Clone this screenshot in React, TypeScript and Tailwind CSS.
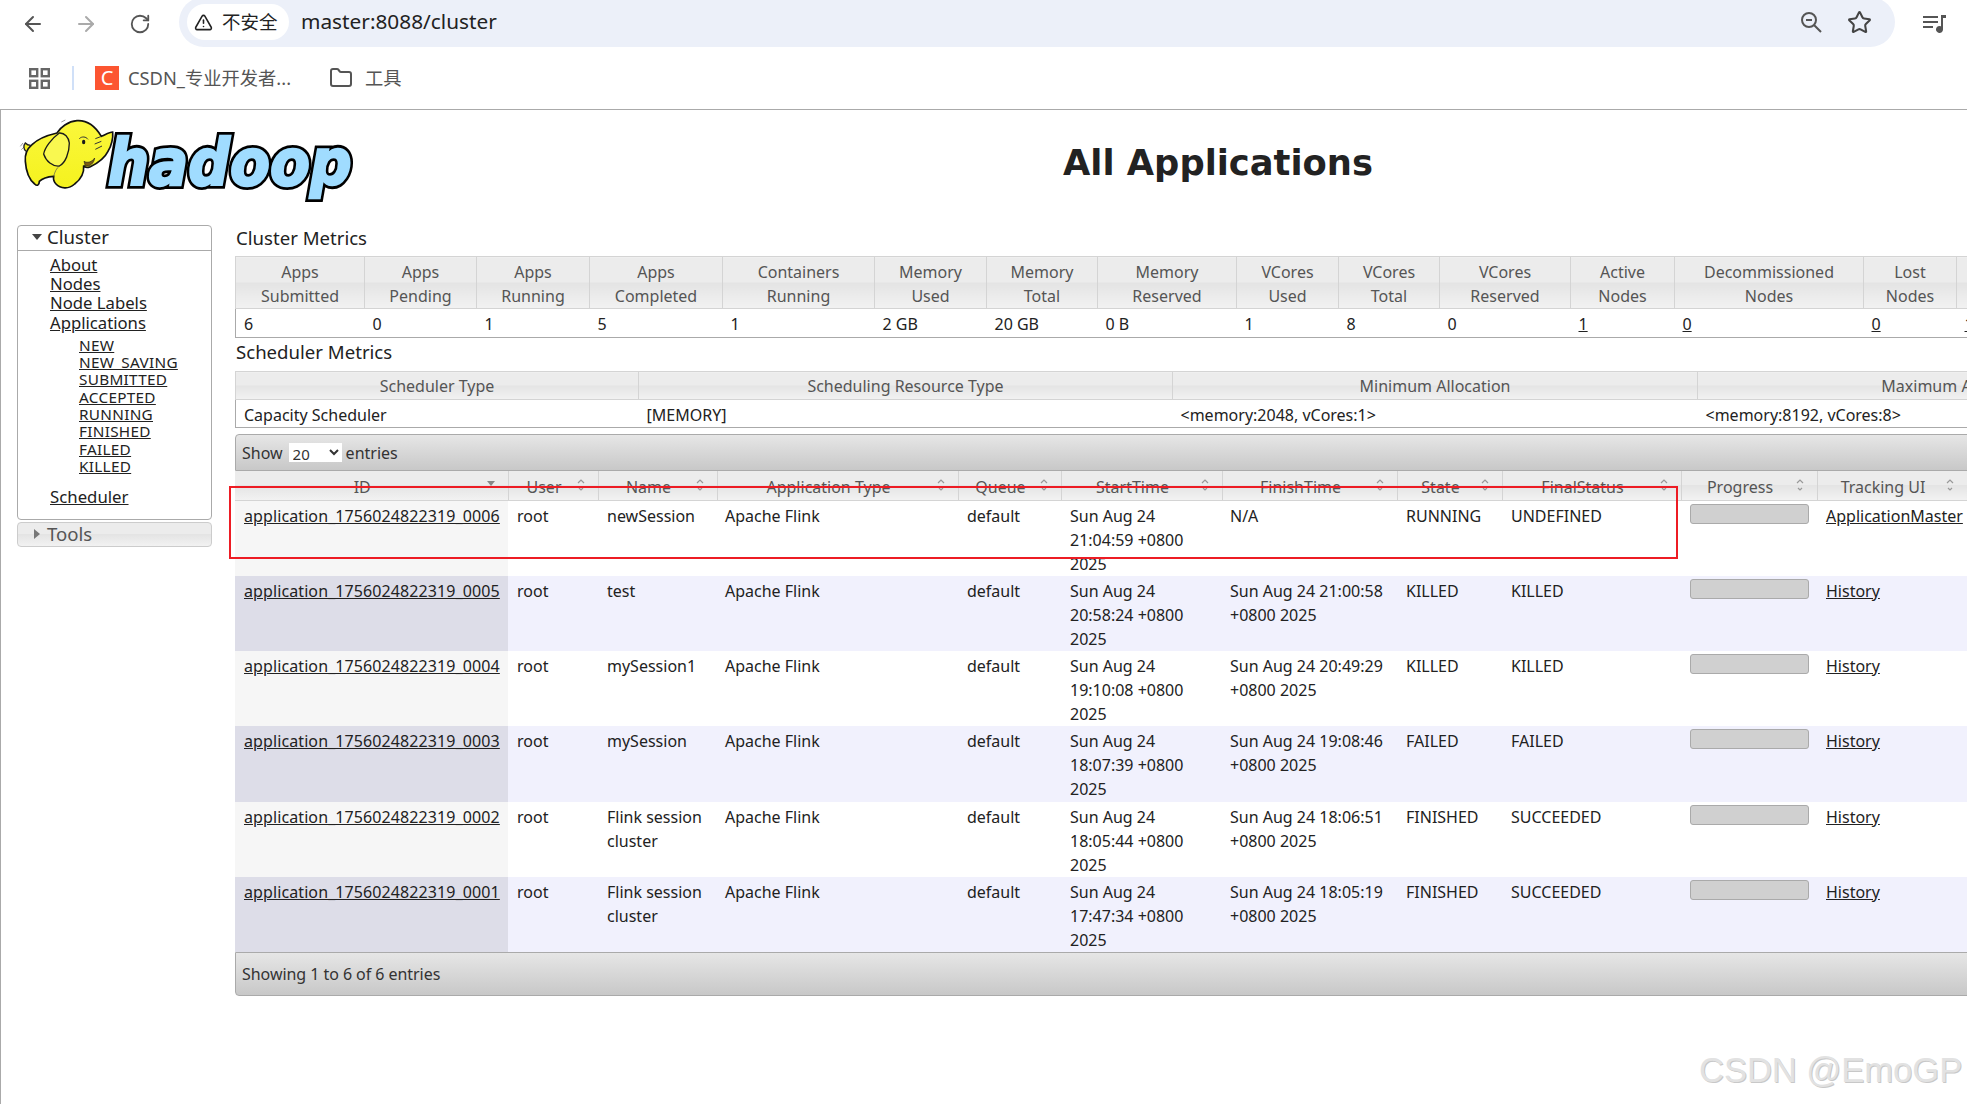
import type { ReactNode } from "react";
import { ArrowLeft, ArrowRight, Folder, RotateCw, Star, TriangleAlert } from "lucide-react";

const metrics = [
  { top: "Apps", bottom: "Submitted", value: "6", w: "w-[129px]" },
  { top: "Apps", bottom: "Pending", value: "0", w: "w-[112px]" },
  { top: "Apps", bottom: "Running", value: "1", w: "w-[113px]" },
  { top: "Apps", bottom: "Completed", value: "5", w: "w-[133px]" },
  { top: "Containers", bottom: "Running", value: "1", w: "w-[152px]" },
  { top: "Memory", bottom: "Used", value: "2 GB", w: "w-[112px]" },
  { top: "Memory", bottom: "Total", value: "20 GB", w: "w-[111px]" },
  { top: "Memory", bottom: "Reserved", value: "0 B", w: "w-[139px]" },
  { top: "VCores", bottom: "Used", value: "1", w: "w-[102px]" },
  { top: "VCores", bottom: "Total", value: "8", w: "w-[101px]" },
  { top: "VCores", bottom: "Reserved", value: "0", w: "w-[131px]" },
  { top: "Active", bottom: "Nodes", value: "1", w: "w-[104px]", link: true },
  { top: "Decommissioned", bottom: "Nodes", value: "0", w: "w-[189px]", link: true },
  { top: "Lost", bottom: "Nodes", value: "0", w: "w-[93px]", link: true },
  { top: "", bottom: "", value: "1", w: "w-[120px]", link: true },
];

const schedulerCols = [
  { label: "Scheduler Type", value: "Capacity Scheduler", w: "w-[403px]" },
  { label: "Scheduling Resource Type", value: "[MEMORY]", w: "w-[534px]" },
  { label: "Minimum Allocation", value: "<memory:2048, vCores:1>", w: "w-[525px]" },
  { label: "Maximum Allocation", value: "<memory:8192, vCores:8>", w: "w-[522px]" },
];

const appCols = [
  { label: "ID", w: "w-[273px]", sorted: true },
  { label: "User", w: "w-[90px]" },
  { label: "Name", w: "w-[119px]" },
  { label: "Application Type", w: "w-[241px]" },
  { label: "Queue", w: "w-[103px]" },
  { label: "StartTime", w: "w-[161px]" },
  { label: "FinishTime", w: "w-[175px]" },
  { label: "State", w: "w-[105px]" },
  { label: "FinalStatus", w: "w-[179px]" },
  { label: "Progress", w: "w-[136px]" },
  { label: "Tracking UI", w: "w-[150px]" },
];

const apps = [
  { id: "application_1756024822319_0006", name: ["newSession"], start: ["Sun Aug 24", "21:04:59 +0800", "2025"], finish: ["N/A"], state: "RUNNING", final: "UNDEFINED", ui: "ApplicationMaster" },
  { id: "application_1756024822319_0005", name: ["test"], start: ["Sun Aug 24", "20:58:24 +0800", "2025"], finish: ["Sun Aug 24 21:00:58", "+0800 2025"], state: "KILLED", final: "KILLED", ui: "History" },
  { id: "application_1756024822319_0004", name: ["mySession1"], start: ["Sun Aug 24", "19:10:08 +0800", "2025"], finish: ["Sun Aug 24 20:49:29", "+0800 2025"], state: "KILLED", final: "KILLED", ui: "History" },
  { id: "application_1756024822319_0003", name: ["mySession"], start: ["Sun Aug 24", "18:07:39 +0800", "2025"], finish: ["Sun Aug 24 19:08:46", "+0800 2025"], state: "FAILED", final: "FAILED", ui: "History" },
  { id: "application_1756024822319_0002", name: ["Flink session", "cluster"], start: ["Sun Aug 24", "18:05:44 +0800", "2025"], finish: ["Sun Aug 24 18:06:51", "+0800 2025"], state: "FINISHED", final: "SUCCEEDED", ui: "History" },
  { id: "application_1756024822319_0001", name: ["Flink session", "cluster"], start: ["Sun Aug 24", "17:47:34 +0800", "2025"], finish: ["Sun Aug 24 18:05:19", "+0800 2025"], state: "FINISHED", final: "SUCCEEDED", ui: "History" },
];

const states = ["NEW", "NEW_SAVING", "SUBMITTED", "ACCEPTED", "RUNNING", "FINISHED", "FAILED", "KILLED"];

const headBg = "bg-[linear-gradient(#ececec_0%,#ececec_48%,#e4e4e4_50%,#f2f2f2_100%)]";

const BrowserBar = () => (
  <div className="border-b border-[#aaaaaa] h-[110px] shadow-[inset_0_-3px_0_#ffffff]">
    <div className="flex items-center h-[47px] text-[#555555]">
      <ArrowLeft className="ml-[21px] w-6 h-6" strokeWidth={2} />
      <ArrowRight className="ml-[29px] w-6 h-6 text-[#aaaaaa]" strokeWidth={2} />
      <RotateCw className="ml-[31px] w-[22px] h-[22px]" strokeWidth={2} />
      <div className="ml-[28px] -mt-[3px] w-[1716px] h-[50px] rounded-[25px] bg-[#ecf0f9] flex items-center pl-2">
        <div className="h-[36px] w-[102px] rounded-full bg-white flex items-center gap-[9px] pl-[7px] text-[#222222]">
          <TriangleAlert className="w-[19px] h-[19px]" strokeWidth={2} />
          <span className="text-[18.5px]">不安全</span>
        </div>
        <span className="ml-3 text-[20.8px] text-[#222222]">master:8088/cluster</span>
        <svg className="ml-auto w-[22px] h-[22px]" viewBox="0 0 22 22" fill="none" stroke="#555555" strokeWidth="2">
          <circle cx="9" cy="9" r="7" />
          <path d="M6 9h6M14 14l7 7" />
        </svg>
        <Star className="ml-[25px] mr-[23px] w-[25px] h-[25px] text-[#444444]" strokeWidth={2} />
      </div>
      <svg className="ml-[28px] w-[23px] h-[18px]" viewBox="0 0 23 18" fill="#555555">
        <path d="M0 1h15v2H0zM0 6h15v2H0zM0 11h10v2H0z" />
        <path d="M18 0h5v3h-3v11.5a3.5 3.5 0 1 1-2-3.2z" />
      </svg>
    </div>
    <div className="flex items-center h-[59px] pt-[3px] text-[#555555] text-[18.3px]">
      <svg className="ml-[29px] w-[21px] h-[21px]" viewBox="0 0 21 21" fill="none" stroke="#666666" strokeWidth="2.4">
        <rect x="1.2" y="1.2" width="7" height="7" />
        <rect x="12.8" y="1.2" width="7" height="7" />
        <rect x="1.2" y="12.8" width="7" height="7" />
        <rect x="12.8" y="12.8" width="7" height="7" />
      </svg>
      <div className="ml-[22px] w-[2px] h-[24px] bg-[#d0e0f8]" />
      <div className="ml-[21px] w-6 h-6 bg-[#fc5531] flex items-center justify-center text-white text-[20px] leading-none">C</div>
      <span className="ml-[9px]">CSDN_专业开发者...</span>
      <Folder className="ml-[38px] w-6 h-6" strokeWidth={2} />
      <span className="ml-[12px]">工具</span>
    </div>
  </div>
);

const logoText = {
  x: 322,
  y: 240,
  fontFamily: "'DejaVu Sans', sans-serif",
  fontWeight: 700,
  fontStyle: "italic",
  fontSize: 190,
  textLength: 732,
  lengthAdjust: "spacingAndGlyphs" as const,
  strokeLinejoin: "miter" as const,
};

const HadoopLogo = () => (
  <svg className="w-[340px] h-[80px] overflow-visible" viewBox="50 40 1020 240">
    <defs>
      <linearGradient id="elephant" x1="0" y1="0" x2="0" y2="1">
        <stop offset="0" stopColor="#faf73c" />
        <stop offset="1" stopColor="#f5f21e" />
      </linearGradient>
    </defs>
    <text {...logoText} fill="#000000" stroke="#000000" strokeWidth="24">hadoop</text>
    <text {...logoText} aria-hidden="true" fill="#a0dcff" stroke="#a0dcff" strokeWidth="7">hadoop</text>
    <g transform="translate(45 30)">
      <path d="M15 95l8-10M18 105l8-8M138 22l12-6" fill="none" stroke="#999999" strokeWidth="3" />
      <path d="M32 110C24 104 24 92 30 85C36 92 42 92 46 92" fill="#f5f21e" stroke="#222222" strokeWidth="4" />
      <path
        d="M50 90C65 75 95 62 125 55C135 38 158 20 185 18C215 16 240 35 258 65C270 60 282 52 292 52C294 70 288 95 278 110C268 130 248 145 225 156C216 160 208 158 205 152C207 175 195 195 178 208C160 225 135 222 122 208C114 200 114 192 115 185C100 186 82 190 72 200C72 210 66 216 58 208C42 195 32 170 30 140C28 120 36 102 50 90Z"
        fill="url(#elephant)"
        stroke="#111111"
        strokeWidth="5"
      />
      <path d="M132 55C108 72 88 100 85 118C92 140 112 156 132 154C150 145 162 115 162 85C160 68 148 54 132 55Z" fill="#f9f850" stroke="#1a1a1a" strokeWidth="4" />
      <ellipse cx="205" cy="82" rx="5" ry="7" fill="#1a1a1a" />
      <path d="M192 72C200 64 212 66 218 74M240 72L256 66M238 88L258 80M240 104L260 94" fill="none" stroke="#333333" strokeWidth="3" />
      <path d="M206 140C216 146 230 142 238 130C236 146 224 156 210 154Z" fill="#7a5a10" stroke="#222222" strokeWidth="2" />
      <path d="M115 185C118 172 124 160 132 154" fill="none" stroke="#555555" strokeWidth="2" />
    </g>
  </svg>
);

const Sidebar = () => (
  <div className="ml-4 w-[195px] shrink-0">
    <div className="h-[295px] border border-[#aaaaaa] rounded">
      <div className="h-[25px] pb-[2px] border-b border-[#aaaaaa] flex items-center text-[#222222] text-[18.6px]">
        <svg className="ml-[14px] w-[10px] h-[6px]" viewBox="0 0 10 6" fill="#444444">
          <path d="M0 0h10L5 6z" />
        </svg>
        <span className="ml-[5px]">Cluster</span>
      </div>
      <div className="pl-[32px] pt-[4px] text-[#222222]">
        <ul className="text-[16.7px] leading-[19.2px]">
          <li><a className="underline">About</a></li>
          <li><a className="underline">Nodes</a></li>
          <li><a className="underline">Node Labels</a></li>
          <li><a className="underline">Applications</a></li>
        </ul>
        <ul className="pl-[29px] pt-[5px] text-[15.3px] leading-[17.3px] tracking-[0.3px]">
          {states.map((s) => (
            <li key={s}><a className="underline">{s}</a></li>
          ))}
        </ul>
        <div className="pt-[12px] text-[16.8px] leading-[19px]"><a className="underline">Scheduler</a></div>
      </div>
    </div>
    <div className={`mt-[2px] h-[25px] pb-[2px] border border-[#cccccc] rounded flex items-center text-[#555555] text-[18.6px] ${headBg}`}>
      <svg className="ml-[16px] w-[6px] h-[10px]" viewBox="0 0 6 10" fill="#777777">
        <path d="M0 0l6 5-6 5z" />
      </svg>
      <span className="ml-[7px]">Tools</span>
    </div>
  </div>
);

const SortIcon = ({ sorted }: { sorted?: boolean }) => (
  <svg className="absolute right-[12px] top-[7px] w-[10px] h-[13px]" viewBox="0 0 10 13">
    {sorted ? (
      <path d="M1 3h8L5 8z" fill="#888888" />
    ) : (
      <path d="M2 5l3-3 3 3M3 10l2 2 2-2" fill="none" stroke="#999999" strokeWidth="1.2" />
    )}
  </svg>
);

const ClusterMetrics = () => (
  <table className="table-fixed border-collapse w-[1841px]">
    <thead>
      <tr className="h-[52px]">
        {metrics.map((m, i) => (
          <th key={i} className={`${m.w} ${headBg} border border-[#d4d4d4] font-normal text-[#555555] leading-[24px] p-0 pt-[3px]`}>
            {m.top}
            <br />
            {m.bottom}
          </th>
        ))}
      </tr>
    </thead>
    <tbody>
      <tr className="h-[29px]">
        {metrics.map((m, i) => (
          <td key={i} className={`pl-[8px] pt-[2px] border-b border-[#aaaaaa] text-[#222222] leading-[23px] ${i === 0 ? "border-l" : ""}`}>
            {m.link ? <a className="underline">{m.value}</a> : m.value}
          </td>
        ))}
      </tr>
    </tbody>
  </table>
);

const SchedulerMetrics = () => (
  <table className="table-fixed border-collapse w-[1984px]">
    <thead>
      <tr className="h-[28px]">
        {schedulerCols.map((c) => (
          <th key={c.label} className={`${c.w} ${headBg} border border-[#d4d4d4] font-normal text-[#555555] p-0`}>{c.label}</th>
        ))}
      </tr>
    </thead>
    <tbody>
      <tr className="h-[28px]">
        {schedulerCols.map((c, i) => (
          <td key={c.label} className={`pl-[8px] pt-[2px] border-b border-[#aaaaaa] text-[#222222] ${i === 0 ? "border-l" : ""}`}>{c.value}</td>
        ))}
      </tr>
    </tbody>
  </table>
);

// every cell keeps a fixed height: the third date line hangs over the row's end, as on the page
const Cell = ({ first, className, children }: { first: boolean; className: string; children: ReactNode }) => (
  <td className={`p-0 ${className}`}>
    <div className={`pt-[3px] whitespace-nowrap ${first ? "h-[75px]" : "h-[75.4px]"}`}>{children}</div>
  </td>
);

const Lines = ({ lines }: { lines: string[] }) => (
  <>
    {lines.map((l) => (
      <div key={l}>{l}</div>
    ))}
  </>
);

const AppsTable = () => (
  <div className="w-[1795px]">
    <div className="h-[37px] border border-[#aaaaaa] rounded-t bg-[linear-gradient(#e6e6e6,#c8c8c8)] flex items-center justify-between px-[6px] text-[#333333]">
      <div className="flex items-center">
        <span>Show</span>
        <select defaultValue="20" className="ml-[6px] mr-[4px] w-[53px] h-[19px] bg-white text-[15px] leading-none">
          <option value="20">20</option>
        </select>
        <span>entries</span>
      </div>
      <span>Search:</span>
    </div>
    <table className="table-fixed border-collapse w-[1732px]">
      <thead>
        <tr className="h-[29px]">
          {appCols.map((c) => (
            <th key={c.label} className={`${c.w} relative ${headBg} border-r border-b border-[#d4d4d4] font-normal text-[#555555] p-0 pt-[4px] pr-[18px] leading-[24px]`}>
              {c.label}
              <SortIcon sorted={c.sorted} />
            </th>
          ))}
        </tr>
      </thead>
      <tbody className="text-[#222222] leading-[24px] align-top">
        {apps.map((a, i) => {
          const even = i % 2 === 1;
          const first = i === 0;
          return (
            <tr key={a.id} className={even ? "bg-[#f1f1fd]" : "bg-white"}>
              <Cell first={first} className={`pl-[9px] ${even ? "bg-[#ddddE8]" : "bg-[#f6f6f6]"}`}>
                <a className="underline tracking-[0.1px]">{a.id}</a>
              </Cell>
              <Cell first={first} className="pl-[9px]">root</Cell>
              <Cell first={first} className="pl-[9px]"><Lines lines={a.name} /></Cell>
              <Cell first={first} className="pl-[8px]">Apache Flink</Cell>
              <Cell first={first} className="pl-[9px]">default</Cell>
              <Cell first={first} className="pl-[9px]"><Lines lines={a.start} /></Cell>
              <Cell first={first} className="pl-[8px]"><Lines lines={a.finish} /></Cell>
              <Cell first={first} className="pl-[9px]">{a.state}</Cell>
              <Cell first={first} className="pl-[9px]">{a.final}</Cell>
              <Cell first={first} className="pl-[9px]">
                <div className="w-[119px] h-[20px] rounded-[3px] border border-[#aaaaaa] bg-[#d0d0d0]" />
              </Cell>
              <Cell first={first} className="pl-[9px]"><a className="underline">{a.ui}</a></Cell>
            </tr>
          );
        })}
      </tbody>
    </table>
    <div className="h-[44px] border border-[#aaaaaa] rounded-b bg-[linear-gradient(#e6e6e6,#c8c8c8)] flex items-center pl-[6px] text-[#333333] tracking-[-0.05px]">
      Showing 1 to 6 of 6 entries
    </div>
  </div>
);

export default function App() {
  return (
    <div className="relative w-[1967px] h-[1104px] overflow-hidden bg-white text-[16px] font-['Noto_Sans','Noto_Sans_CJK_SC',sans-serif]">
      <BrowserBar />
      <div className="border-l border-[#aaaaaa] h-[994px]">
        <div className="flex h-[115px]">
          <div className="ml-[16px] mt-[8px]"><HadoopLogo /></div>
          <h1 className="ml-[706px] mt-[26px] font-['DejaVu_Sans',sans-serif] text-[35.3px] leading-[54px] font-bold text-[#222222]">All Applications</h1>
        </div>
        <div className="flex">
          <Sidebar />
          <div className="ml-[23px]">
            <h3 className="h-[31px] pl-[1px] text-[18.6px] leading-[26px] text-[#222222]">Cluster Metrics</h3>
            <ClusterMetrics />
            <h3 className="h-[33px] pl-[1px] text-[18.6px] leading-[28px] text-[#222222]">Scheduler Metrics</h3>
            <SchedulerMetrics />
            <div className="h-[6px]" />
            <AppsTable />
          </div>
        </div>
      </div>
      <div className="absolute left-[229px] top-[486px] w-[1449px] h-[73px] border-2 border-[#ed1c24] pointer-events-none" />
      <div className="absolute left-[1699px] top-[1050px] font-['Liberation_Sans',sans-serif] text-[34.5px] leading-[40px] text-[#e2e2e2] [text-shadow:1px_1px_0_#c8c8c8]">
        CSDN @EmoGP
      </div>
    </div>
  );
}
